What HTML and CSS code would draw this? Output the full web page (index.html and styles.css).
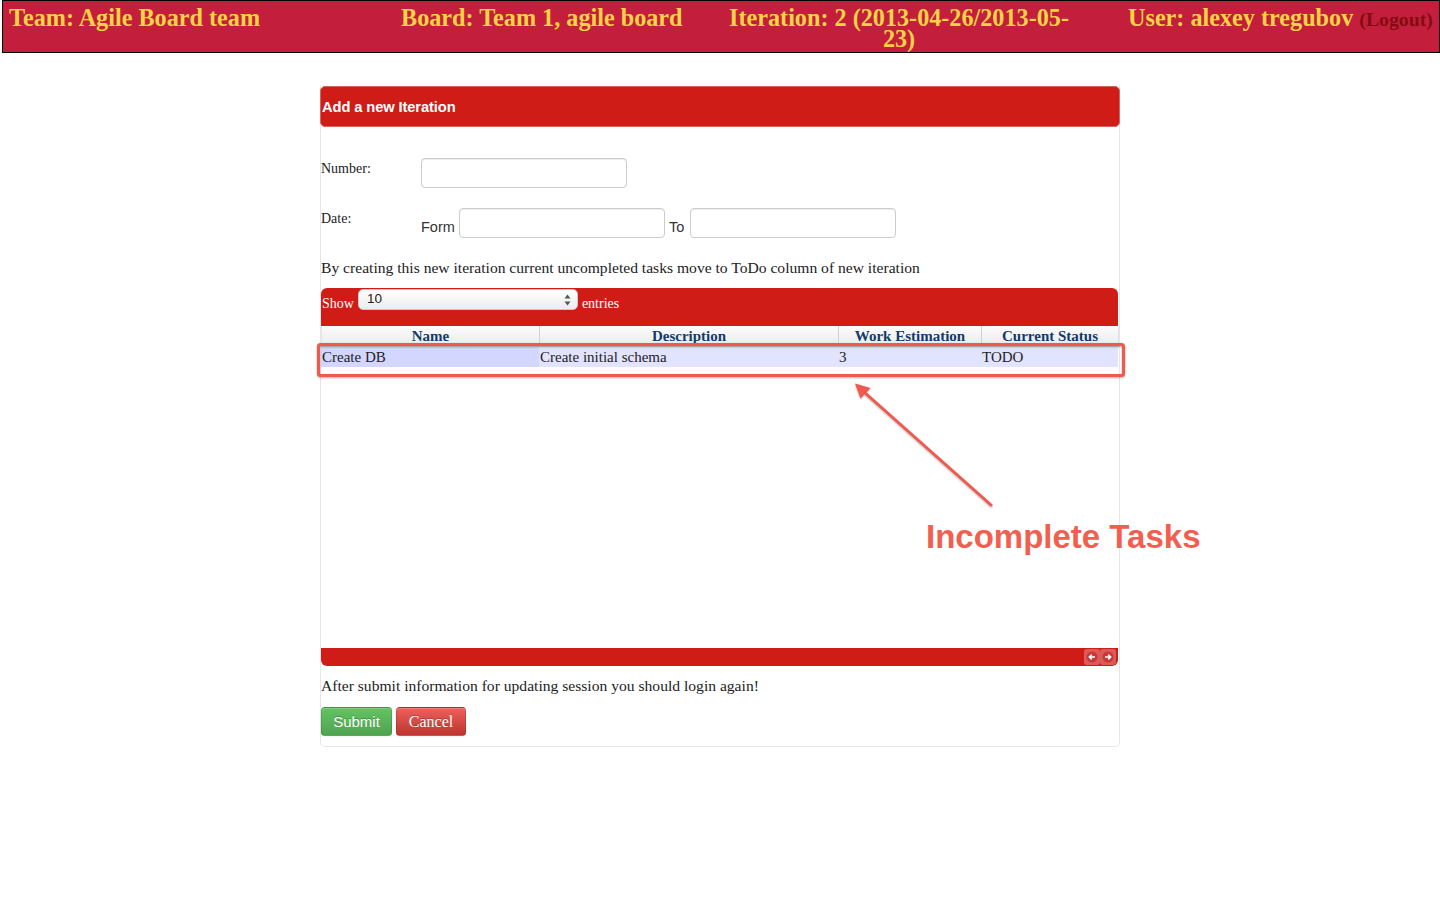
FILE: index.html
```html
<!DOCTYPE html>
<html>
<head>
<meta charset="utf-8">
<title>Add a new Iteration</title>
<link rel="stylesheet" href="styles.css">
</head>
<body>
<header class="topbar">
  <div class="tb-cell tb-team">Team: Agile Board team</div>
  <div class="tb-cell tb-board">Board: Team 1, agile board</div>
  <div class="tb-cell tb-iter">Iteration: 2 (2013-04-26/2013-05-<br>23)</div>
  <div class="tb-cell tb-user">User: alexey tregubov <a class="logout">(Logout)</a></div>
</header>

<section class="card">
  <div class="card-head">Add a new Iteration</div>
  <div class="card-body">
    <div class="form-grid">
      <div class="f-label">Number:</div>
      <div class="f-field"><span class="input"></span></div>
      <div class="f-label">Date:</div>
      <div class="f-field f-dates">
        <span class="f-word f-word-form">Form</span>
        <span class="input"></span>
        <span class="f-word f-word-to">To</span>
        <span class="input"></span>
      </div>
    </div>

    <p class="note">By creating this new iteration current uncompleted tasks move to ToDo column of new iteration</p>

    <div class="dt">
      <div class="dt-toolbar">
        <span class="dt-word">Show</span>
        <div class="dt-select">
          <span>10</span>
          <svg class="dt-arrows" width="7" height="12" viewBox="0 0 7 12"><path d="M3.5 0.5 L6.5 4.5 L0.5 4.5 Z M3.5 11.5 L6.5 7.5 L0.5 7.5 Z" fill="#555"/></svg>
        </div>
        <span class="dt-word">entries</span>
      </div>
      <table class="dt-head">
        <colgroup><col class="c1"><col class="c2"><col class="c3"><col class="c4"></colgroup>
        <thead>
          <tr><th>Name</th><th>Description</th><th>Work Estimation</th><th>Current Status</th></tr>
        </thead>
      </table>
      <div class="dt-scroll">
        <table class="dt-body">
          <colgroup><col class="c1"><col class="c2"><col class="c3"><col class="c4"></colgroup>
          <tbody>
            <tr class="odd"><td class="sorted">Create DB</td><td>Create initial schema</td><td>3</td><td>TODO</td></tr>
          </tbody>
        </table>
      </div>
      <div class="dt-footer">
        <span class="pg-btn"><svg width="12" height="12" viewBox="0 0 12 12"><circle cx="6" cy="6" r="5.5" fill="#c8383a"/><path d="M9 6 H3.5 M5.8 3.6 L3.3 6 L5.8 8.4" stroke="#fff" stroke-width="1.5" fill="none"/></svg></span>
        <span class="pg-btn"><svg width="12" height="12" viewBox="0 0 12 12"><circle cx="6" cy="6" r="5.5" fill="#c8383a"/><path d="M3 6 H8.5 M6.2 3.6 L8.7 6 L6.2 8.4" stroke="#fff" stroke-width="1.5" fill="none"/></svg></span>
      </div>
    </div>

    <p class="note note-after">After submit information for updating session you should login again!</p>

    <div class="actions">
      <button class="btn btn-success">Submit</button>
      <button class="btn btn-danger">Cancel</button>
    </div>
  </div>
</section>

<div class="annot">
  <svg class="annot-svg" width="1440" height="900" viewBox="0 0 1440 900">
    <g class="annot-shapes">
      <rect x="318.5" y="344.5" width="805" height="31" rx="2" fill="none" stroke="#f05a4e" stroke-width="3"/>
      <line x1="991" y1="505" x2="864" y2="392" stroke="#f05a4e" stroke-width="3" stroke-linecap="round"/>
      <path d="M855 383.5 L870.5 388 L860.5 398.5 Z" fill="#f05a4e"/>
    </g>
  </svg>
  <div class="annot-text">Incomplete Tasks</div>
</div>
</body>
</html>
```

FILE: styles.css
```css
html, body {
  margin: 0;
  padding: 0;
  background: #fff;
}
body {
  font-family: "Liberation Serif", "Times New Roman", serif;
  font-size: 14px;
  line-height: 20px;
  color: #222;
  position: relative;
  width: 1440px;
  height: 900px;
  overflow: hidden;
}

/* ---------- top bar ---------- */
.topbar {
  margin-left: 2px;
  box-sizing: border-box;
  height: 53px;
  border: 1px solid #000;
  background: #c31f3c;
  display: grid;
  grid-template-columns: 392px 329px 350px 1fr;
  padding: 6px 0 0;
  font-family: "Liberation Serif", "Times New Roman", serif;
  font-weight: bold;
  font-size: 24.2px;
  line-height: 21px;
  color: #fdd245;
  overflow: hidden;
}
.tb-cell {
  white-space: nowrap;
}
.tb-team { padding-left: 6px; }
.tb-board { padding-left: 6px; }
.tb-iter { text-align: center; }
.tb-user { padding-left: 54px; }
.logout {
  font-size: 19.8px;
  color: #850b12;
}

/* ---------- card ---------- */
.card {
  box-sizing: border-box;
  width: 800px;
  margin: 33px auto 0;
  border: 1px solid #e6e6e6;
  border-top: none;
  border-radius: 0 0 5px 5px;
}
.card-head {
  margin: 0 -1px;
  height: 41px;
  box-sizing: border-box;
  background: #d01c17;
  border: 1px solid #d8625c;
  border-radius: 5px;
  display: flex;
  align-items: center;
  padding-left: 1px;
  font-family: "Liberation Sans", Arial, sans-serif;
  font-weight: bold;
  font-size: 14.7px;
  letter-spacing: -0.1px;
  color: #fff;
}
.card-body {
  padding: 31px 0 10px;
}

/* ---------- form ---------- */
.form-grid {
  display: grid;
  grid-template-columns: 100px 1fr;
  row-gap: 20px;
}
.f-label {
  line-height: 20px;
  padding-top: 1px;
}
.f-field {
  display: flex;
  align-items: flex-end;
}
.f-dates {
  gap: 4px;
}
.f-word {
  font-family: "Liberation Sans", Arial, sans-serif;
  font-size: 14.5px;
  line-height: 20px;
  color: #333;
  margin-bottom: 1px;
}
.f-word-form { width: 34px; }
.f-word-to { width: 17px; }
.input {
  display: block;
  box-sizing: border-box;
  width: 206px;
  height: 30px;
  background: #fff;
  border: 1px solid #cccccc;
  border-radius: 4px;
  box-shadow: inset 0 1px 1px rgba(0, 0, 0, 0.075);
}

.note {
  margin: 20px 0 0;
  line-height: 20px;
  font-size: 15.6px;
}

/* ---------- datatable ---------- */
.dt {
  margin: 10px 1px 0 0;
}
.dt-toolbar {
  height: 38px;
  box-sizing: border-box;
  background: #d01c17;
  border-radius: 6px 6px 0 0;
  padding: 1px 0 0 1px;
  display: flex;
  align-items: flex-start;
  gap: 4px;
  color: #fff;
}
.dt-word {
  margin-top: 5px;
  line-height: 20px;
  font-size: 14px;
}
.dt-select {
  box-sizing: border-box;
  width: 220px;
  height: 21px;
  border: 1px solid #c9c9c9;
  border-radius: 5px;
  background: linear-gradient(#ffffff, #ececec);
  display: flex;
  align-items: center;
  justify-content: space-between;
  padding: 0 6px 1px 8px;
  font-family: "Liberation Sans", Arial, sans-serif;
  font-size: 13.5px;
  line-height: 16px;
  color: #222;
}
.dt-arrows {
  display: block;
  margin-top: 2px;
}

.dt-head, .dt-body {
  width: 797px;
  border-collapse: collapse;
  table-layout: fixed;
}
.c1 { width: 218px; }
.c2 { width: 299px; }
.c3 { width: 143px; }
.c4 { width: 137px; }

.dt-head th {
  height: 20px;
  padding: 0;
  line-height: 20px;
  font-size: 15px;
  font-weight: bold;
  color: #133a6c;
  text-align: center;
  background: linear-gradient(#fbfbfb, #ebebeb);
  border-left: 1px solid #d2d2d2;
  border-bottom: 1px solid #cfcfcf;
}
.dt-head th:first-child {
  border-left: 1px solid #e6e6e6;
}
.dt-head th:last-child {
  border-right: 1px solid #e0e0e0;
}
.dt-scroll {
  height: 301px;
}
.dt-body td {
  padding: 0 0 0 1px;
  height: 20px;
  line-height: 20px;
  font-size: 15px;
  color: #222;
  white-space: nowrap;
}
.dt-body tr.odd td {
  background: #e2e4ff;
}
.dt-body tr.odd td.sorted {
  background: #d3d6ff;
}
.dt-footer {
  height: 18px;
  background: #d01c17;
  border-radius: 0 0 6px 6px;
  display: flex;
  justify-content: flex-end;
  align-items: center;
  padding-right: 2px;
}
.pg-btn {
  width: 16px;
  height: 16px;
  box-sizing: border-box;
  background: rgba(255, 255, 255, 0.28);
  border-radius: 3px;
  display: flex;
  align-items: center;
  justify-content: center;
}
.pg-btn svg { display: block; }

.note-after {
  margin-top: 10px;
}

/* ---------- buttons ---------- */
.actions {
  display: flex;
  gap: 4px;
  margin-top: 11px;
}
.btn {
  box-sizing: border-box;
  height: 29px;
  border: 1px solid rgba(0, 0, 0, 0.12);
  border-radius: 4px;
  color: #fff;
  padding: 0;
  text-shadow: 0 -1px 0 rgba(0, 0, 0, 0.25);
  box-shadow: inset 0 1px 0 rgba(255, 255, 255, 0.2), 0 1px 2px rgba(0, 0, 0, 0.05);
  cursor: pointer;
}
.btn-success {
  width: 71px;
  font-family: "Liberation Sans", Arial, sans-serif;
  font-size: 15px;
  background: linear-gradient(#62c462, #51a351);
}
.btn-danger {
  width: 70px;
  font-family: "Liberation Serif", "Times New Roman", serif;
  font-size: 16px;
  background: linear-gradient(#ee5f5b, #bd362f);
}

/* ---------- annotation overlay ---------- */
.annot {
  position: absolute;
  left: 0;
  top: 0;
  width: 1440px;
  height: 900px;
  pointer-events: none;
}
.annot-svg {
  position: absolute;
  left: 0;
  top: 0;
}
.annot-shapes {
  filter: drop-shadow(0 1px 1px rgba(0, 0, 0, 0.3));
}
.annot-text {
  position: absolute;
  left: 926px;
  top: 521px;
  font-family: "Liberation Sans", Arial, sans-serif;
  font-weight: bold;
  font-size: 33px;
  line-height: 32px;
  color: #f25f50;
  white-space: nowrap;
}
```
